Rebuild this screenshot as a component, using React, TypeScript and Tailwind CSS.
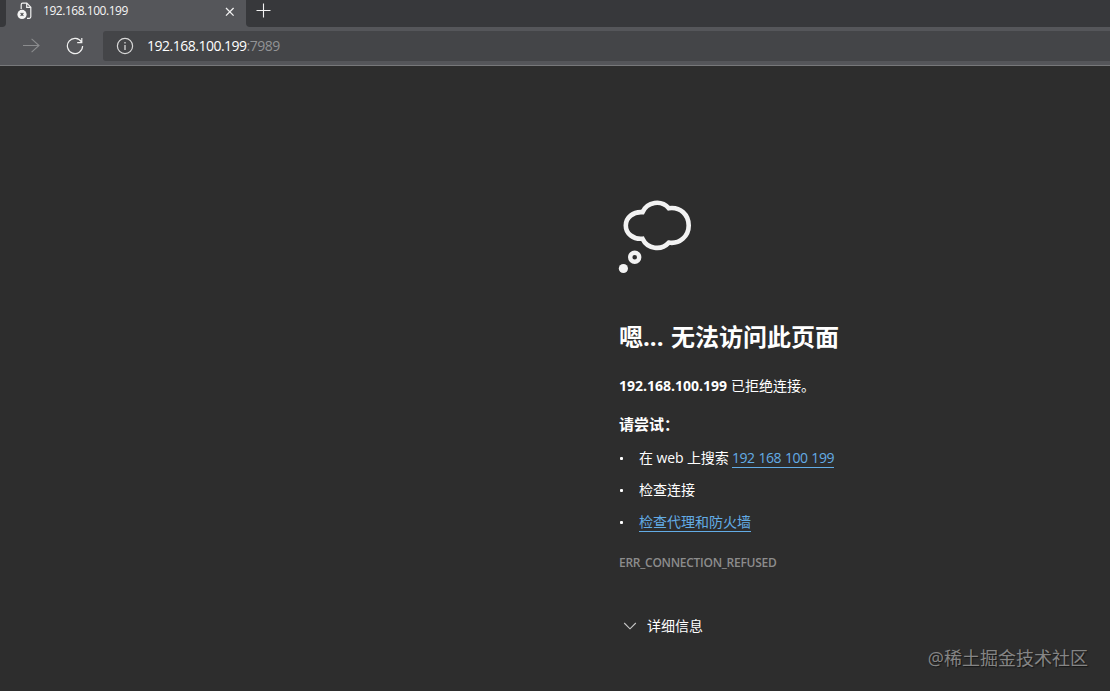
import type { ReactNode } from "react";

interface SuggestionProps {
  children: ReactNode;
}

function BrokenPageIcon() {
  return (
    <svg width="16" height="18" viewBox="0 0 16 18" fill="none">
      <path
        d="M4.2 8V3.7a1.5 1.5 0 0 1 1.5-1.5h4.1l4 4v9.6a1.5 1.5 0 0 1-1.5 1.5H10M9.7 2.4v3.9h3.9"
        stroke="#f1f1f1"
        strokeWidth="1.2"
      />
      <circle cx="5" cy="13.4" r="4.6" fill="#f4f4f4" />
      <path d="m3.6 12 2.8 2.8m0-2.8-2.8 2.8" stroke="#55575a" strokeWidth="1.1" />
    </svg>
  );
}

function TabStrip() {
  return (
    <div className="flex h-[27px] bg-[#55565a]">
      <div className="h-[27px] w-1.5 rounded-br-[4px] bg-[#37383b]" />
      <div className="flex h-[27px] w-60 items-start bg-[#55565a] pl-[11px] pr-[10px]">
        <div className="mt-[1px]">
          <BrokenPageIcon />
        </div>
        <span className="ml-[10px] mt-[2px] text-xs leading-[18px] tracking-[-0.46px] text-[#f5f5f5]">
          192.168.100.199
        </span>
        <svg
          className="ml-auto mt-[6px]"
          width="12"
          height="12"
          viewBox="0 0 12 12"
          fill="none"
        >
          <path d="m2 2 7.6 7.6m0-7.6L2 9.6" stroke="#f2f2f2" strokeWidth="1.3" />
        </svg>
      </div>
      <div className="h-[27px] flex-1 rounded-bl-[4px] bg-[#37383b] pl-[10px] pt-[3px]">
        <svg width="15" height="15" viewBox="0 0 15 15" fill="none">
          <path d="M7.5.5v14M.5 7.5h14" stroke="#f2f2f2" strokeWidth="1.1" />
        </svg>
      </div>
    </div>
  );
}

function Toolbar() {
  return (
    <div className="flex h-[39px] items-center border-b border-[#77787a] bg-[#55565a] pl-[22px]">
      <svg width="18" height="16" viewBox="0 0 18 16" fill="none">
        <path d="M1 7.5h16M9.6.8 17 7.5l-7.4 6.7" stroke="#8b8c8e" strokeWidth="1.1" />
      </svg>
      <svg
        className="ml-[26px]"
        width="18"
        height="18"
        viewBox="0 0 18 18"
        fill="none"
      >
        <path
          d="M15.5 5A7.6 7.6 0 1 0 16.6 9M15.8 1v4.6h-4.6"
          stroke="#f0f0f0"
          strokeWidth="1.2"
        />
      </svg>
      <div className="ml-[19px] flex h-[30px] flex-1 items-center rounded-l-[3px] bg-[#444548] pl-[13px]">
        <svg width="18" height="18" viewBox="0 0 18 18" fill="none">
          <circle cx="9" cy="9" r="7.6" stroke="#d8d8d8" strokeWidth="1.2" />
          <path d="M9 8v5M9 5v1.5" stroke="#d8d8d8" strokeWidth="1.3" />
        </svg>
        <span className="ml-[13px] text-sm tracking-[-0.5px] text-white">
          192.168.100.199
        </span>
        <span className="text-sm tracking-[-0.5px] text-[#929395]">:7989</span>
      </div>
    </div>
  );
}

function ThoughtBubble() {
  return (
    <svg
      className="overflow-visible"
      width="74"
      height="74"
      viewBox="0 0 74 74"
      fill="none"
    >
      <path
        d="M23.5 11.2A15.8 15.8 0 0 1 49.8 7.2C61.5 5.5 69.7 14 69.7 24.5C69.7 35.5 60.5 43.2 49.8 41.6A16 16 0 0 1 23.5 37.7C14 38.5 6.8 32.5 6.8 24.5C6.8 16.5 14 10.5 23.5 11.2Z"
        stroke="#f2f2f2"
        strokeWidth="4.6"
      />
      <circle cx="15.7" cy="56.3" r="4.5" stroke="#f2f2f2" strokeWidth="4.4" />
      <circle cx="4.4" cy="67.5" r="4.6" fill="#f2f2f2" />
    </svg>
  );
}

function Suggestion({ children }: SuggestionProps) {
  return (
    <li className="flex h-8 items-center">
      <span className="ml-[1px] mr-[16px] size-[3px] rounded-[1px] bg-white" />
      {children}
    </li>
  );
}

export default function App() {
  return (
    <div className="h-[691px] w-[1110px] overflow-hidden bg-[#2d2d2d] font-['Open_Sans','Noto_Sans_CJK_SC',sans-serif] text-white">
      <TabStrip />
      <Toolbar />
      <main className="flex h-[625px] flex-col pl-[619px] pt-[135px]">
        <ThoughtBubble />
        <h1 className="mt-[44px] flex h-9 items-center text-2xl font-bold">
          <span className="w-[52px] whitespace-nowrap">嗯...</span>
          <span>无法访问此页面</span>
        </h1>
        <p className="mt-[21px] flex h-5 items-center text-sm">
          <b className="mr-1">192.168.100.199</b>
          已拒绝连接。
        </p>
        <h2 className="mt-[18px] flex h-5 items-center text-[15px] font-bold">
          请尝试：
        </h2>
        <ul className="mt-[8px] text-sm">
          <Suggestion>
            <span className="w-[93px] whitespace-nowrap tracking-[-0.1px]">
              在 web 上搜索
            </span>
            <a className="border-b border-[#63ace5] leading-[18px] tracking-[-0.45px] text-[#63ace5] [word-spacing:0.6px]">
              192 168 100 199
            </a>
          </Suggestion>
          <Suggestion>检查连接</Suggestion>
          <Suggestion>
            <a className="border-b border-[#63ace5] leading-[18px] text-[#63ace5]">
              检查代理和防火墙
            </a>
          </Suggestion>
        </ul>
        <div className="mt-[15px] h-5 text-xs font-semibold leading-5 tracking-[-0.27px] text-[#8c8c8c]">
          ERR_CONNECTION_REFUSED
        </div>
        <button className="mt-[43px] flex h-5 items-center pl-1 text-sm">
          <svg
            className="mr-[10px]"
            width="14"
            height="8"
            viewBox="0 0 14 8"
            fill="none"
          >
            <path d="m1.2 1 5.8 5.8L12.8 1" stroke="#c8c8c8" strokeWidth="1.1" />
          </svg>
          详细信息
        </button>
        <div className="mr-[22px] mt-[10px] self-end text-[18px] leading-6 text-[#858585] [text-shadow:1px_1px_1px_#171717]">
          @稀土掘金技术社区
        </div>
      </main>
    </div>
  );
}
